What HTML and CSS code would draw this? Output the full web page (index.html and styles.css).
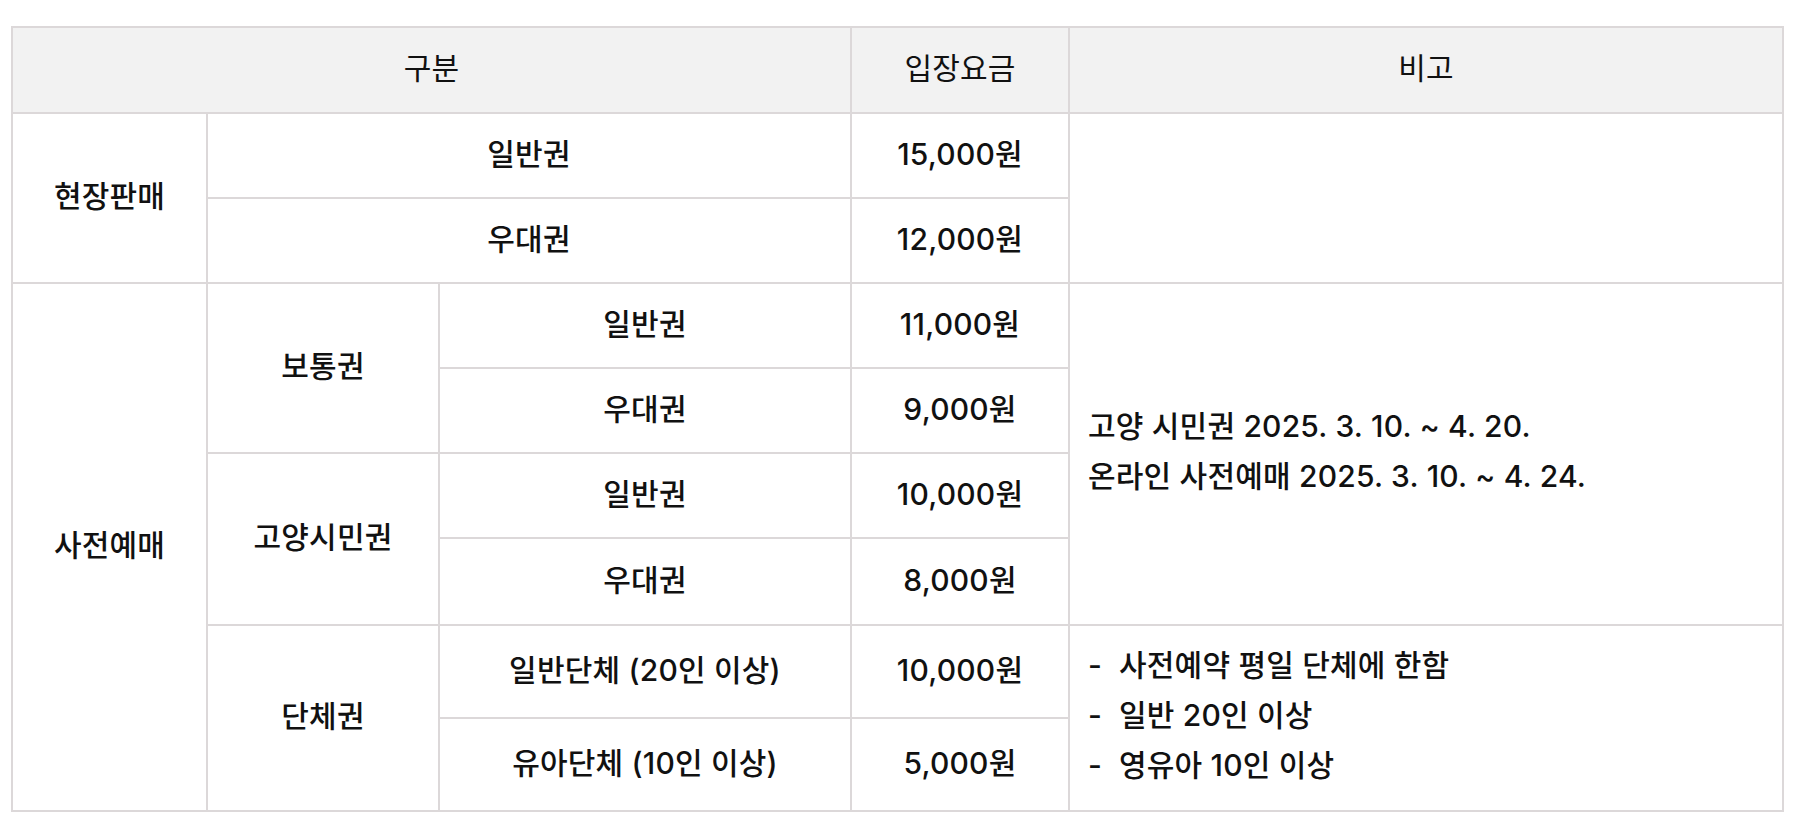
FILE: index.html
```html
<!DOCTYPE html>
<html lang="ko">
<head>
<meta charset="utf-8">
<title>입장요금</title>
<link rel="stylesheet" href="styles.css">
</head>
<body>
<div class="wrap">
<table class="fee">
  <colgroup>
    <col class="c1"><col class="c2"><col class="c3"><col class="c4"><col class="c5">
  </colgroup>
  <thead>
    <tr class="head">
      <th colspan="3">구분</th>
      <th>입장요금</th>
      <th>비고</th>
    </tr>
  </thead>
  <tbody>
    <tr class="r">
      <td rowspan="2">현장판매</td>
      <td colspan="2">일반권</td>
      <td>15,000원</td>
      <td rowspan="2"></td>
    </tr>
    <tr class="r">
      <td colspan="2">우대권</td>
      <td>12,000원</td>
    </tr>
    <tr class="r">
      <td rowspan="6">사전예매</td>
      <td rowspan="2">보통권</td>
      <td>일반권</td>
      <td>11,000원</td>
      <td rowspan="4" class="note">고양 시민권 2025. 3. 10. ~ 4. 20.<br>온라인 사전예매 2025. 3. 10. ~ 4. 24.</td>
    </tr>
    <tr class="r">
      <td>우대권</td>
      <td>9,000원</td>
    </tr>
    <tr class="r">
      <td rowspan="2">고양시민권</td>
      <td>일반권</td>
      <td>10,000원</td>
    </tr>
    <tr class="r r6">
      <td>우대권</td>
      <td>8,000원</td>
    </tr>
    <tr class="r tall">
      <td rowspan="2">단체권</td>
      <td>일반단체 (20인 이상)</td>
      <td>10,000원</td>
      <td rowspan="2" class="note">
        <ul class="list">
          <li><span class="dash">-</span>사전예약 평일 단체에 한함</li>
          <li><span class="dash">-</span>일반 20인 이상</li>
          <li><span class="dash">-</span>영유아 10인 이상</li>
        </ul>
      </td>
    </tr>
    <tr class="r tall">
      <td>유아단체 (10인 이상)</td>
      <td>5,000원</td>
    </tr>
  </tbody>
</table>
</div>
</body>
</html>
```

FILE: styles.css
```css
html, body {
  margin: 0;
  padding: 0;
  background: #ffffff;
}
.wrap {
  padding: 26px 0 0 11px;
}
.fee {
  border-collapse: collapse;
  table-layout: fixed;
  width: 1773px;
  font-family: "Inter", "Noto Sans CJK KR", "Noto Sans", sans-serif;
  font-size: 30px;
  color: #111111;
  letter-spacing: 0.2px;
}
.c1 { width: 195px; }
.c2 { width: 232px; }
.c3 { width: 412px; }
.c4 { width: 218px; }
.c5 { width: 714px; }
.fee th, .fee td {
  border: 2px solid #dcd8d9;
  text-align: center;
  vertical-align: middle;
  padding: 0 12px 8px;
}
.fee th {
  background: #f2f2f2;
  font-weight: 400;
  height: 76px;
}
.fee td {
  font-weight: 500;
}
.r td { height: 75px; }
.r6 td { height: 77px; }
.tall td { height: 83px; }
.fee td.note {
  text-align: left;
  padding: 0 18px 6px;
  line-height: 50px;
}
.list {
  list-style: none;
  margin: 0;
  padding: 0;
}
.dash {
  display: inline-block;
  width: 31px;
}
```
